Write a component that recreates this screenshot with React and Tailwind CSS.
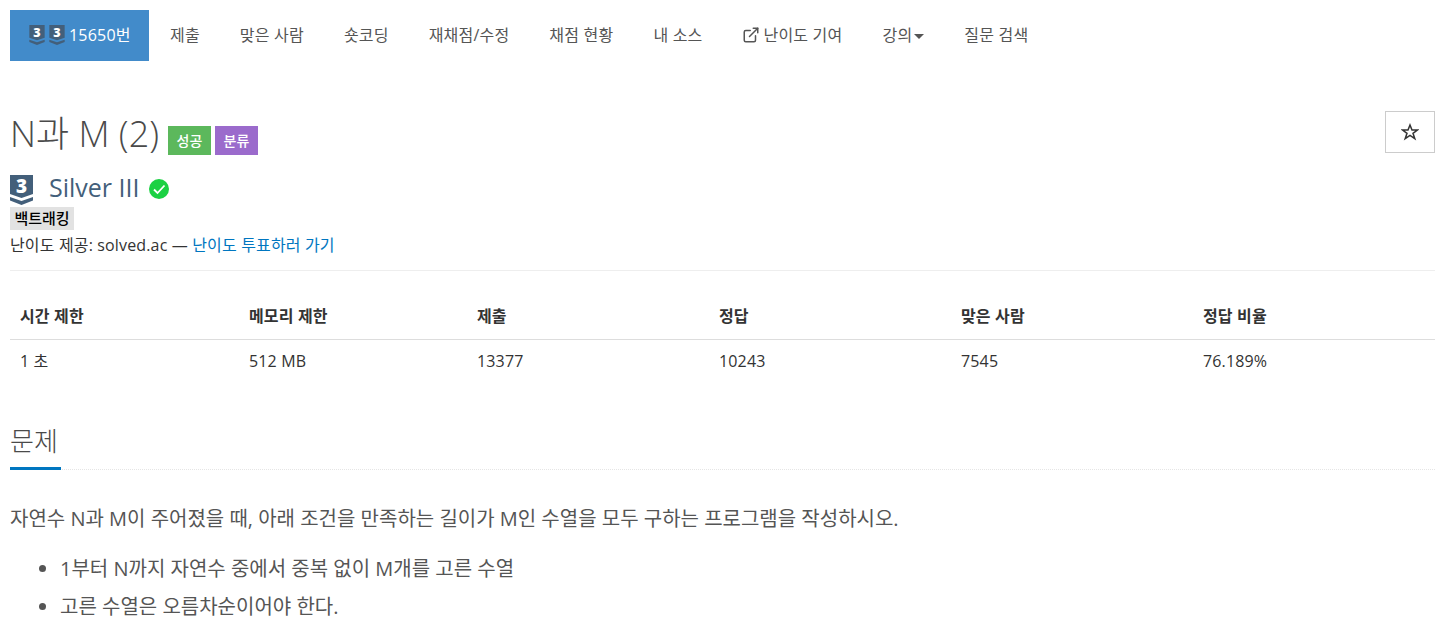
import React from 'react';
import { ExternalLink } from 'lucide-react';

const font = 'font-["Open_Sans","Noto_Sans_CJK_KR",sans-serif]';

function TierBadge({ className }) {
  return (
    <svg className={`overflow-visible ${className}`} viewBox="0 0 23 30" fill="none">
      <path d="M0 0h23v19l-11.500 4L0 19z" fill="#435f7a" />
      <path d="M0 22l11.500 4 11.500-4v3.500L11.500 30 0 25.500z" fill="#435f7a" />
      <text x="11.500" y="18" textAnchor="middle" fontSize="19" fontWeight="800" fill="#fff" fontFamily="Open Sans, sans-serif">3</text>
    </svg>
  );
}

export default function App() {
  const navItems = ['제출', '맞은 사람', '숏코딩', '재채점/수정', '채점 현황', '내 소스'];
  const heads = ['시간 제한', '메모리 제한', '제출', '정답', '맞은 사람', '정답 비율'];
  const cells = ['1 초', '512 MB', '13377', '10243', '7545', '76.189%'];
  const widths = ['w-[229px]', 'w-[228px]', 'w-[242px]', 'w-[242px]', 'w-[242px]', 'w-[242px]'];

  return (
    <div className={`${font} bg-white h-[634px] overflow-hidden pl-[10px] pr-[18px] pt-[10px] text-[16px] text-[#333]`}>
      <ul className="flex h-[51px] items-center text-[#555] tracking-[0.2px]">
        <li className="flex h-full w-[139px] items-center pl-[19px] pb-[2px] bg-[#428bca] text-white">
          <TierBadge className="w-[16px] h-[20px]" />
          <TierBadge className="ml-[4px] w-[16px] h-[20px]" />
          <span className="ml-[4px]">15650번</span>
        </li>
        {navItems.map((item, i) => (
          <li key={item} className={`${i === 0 ? 'ml-[1px]' : ''} mb-[2px] px-[20px] whitespace-nowrap`}>{item}</li>
        ))}
        <li className="flex items-center mb-[2px] px-[20px] whitespace-nowrap">
          <ExternalLink className="-ml-[1px] w-[18px] h-[18px] mr-[4px]" strokeWidth={2} />
          난이도 기여
        </li>
        <li className="flex items-center mb-[2px] px-[20px] whitespace-nowrap">
          강의
          <span className="ml-[2px] mt-[3px] border-x-[5px] border-t-[5px] border-x-transparent border-t-[#555]" />
        </li>
        <li className="mb-[2px] px-[20px] whitespace-nowrap">질문 검색</li>
      </ul>

      <div className="flex items-start justify-between pt-[50px]">
        <div className="flex items-center h-[46px]">
          <h1 className="text-[36px] leading-[46px] font-light text-[#4a4a4a]">N과 M (2)</h1>
          <span className="ml-[9px] mt-[13px] flex h-[29px] w-[43px] items-center justify-center bg-[#5cb85c] text-[14px] font-medium text-white">성공</span>
          <span className="ml-[4px] mt-[13px] flex h-[29px] w-[43px] items-center justify-center bg-[#9b6bcc] text-[14px] font-medium text-white">분류</span>
        </div>
        <button className="flex h-[42px] w-[50px] items-center justify-center border border-[#ccc] bg-white">
          <svg className="w-[18px] h-[18px]" viewBox="0 0 18 18" fill="none">
            <path d="M9 2l2 5h5.500l-4.500 3.300 1.800 5.400L9 12.500l-4.800 3.200L6 10.300 1.500 7H7z" stroke="#333" strokeWidth="1.500" />
          </svg>
        </button>
      </div>

      <div className="flex items-center h-[34px] mt-[14px]">
        <TierBadge className="mt-[3px] w-[23px] h-[30px]" />
        <span className="ml-[16px] text-[25px] text-[#435f7a]">Silver III</span>
        <svg className="ml-[9px] mt-[2px] w-[20px] h-[20px]" viewBox="0 0 20 20" fill="none">
          <circle cx="10" cy="10" r="10" fill="#1bd143" />
          <path d="M5 10.500l3.500 3.500L15.500 6.500" stroke="#fff" strokeWidth="1.800" />
        </svg>
      </div>

      <div className="flex mt-[2px]">
        <span className="flex h-[23px] w-[64px] items-center justify-center bg-[#e2e2e2] text-[15px] font-medium text-black">백트래킹</span>
      </div>
      <div className="h-[28px] leading-[28px] mt-[1px] tracking-[0.15px]">
        난이도 제공: solved.ac — <span className="text-[#0076c0]">난이도 투표하러 가기</span>
      </div>
      <div className="mt-[11px] border-t border-[#eee]" />

      <table className="mt-[22px] w-full table-fixed border-collapse tracking-[0.15px]">
        <thead>
          <tr className="border-b border-[#ddd]">
            {heads.map((h, i) => (
              <th key={h} className={`${widths[i]} h-[46px] px-[10px] text-left font-bold`}>{h}</th>
            ))}
          </tr>
        </thead>
        <tbody>
          <tr>
            {cells.map(c => (
              <td key={c} className="h-[44px] px-[10px]">{c}</td>
            ))}
          </tr>
        </tbody>
      </table>

      <div className="mt-[37px] border-b border-dotted border-[#e5e5e5] h-[50px] flex">
        <h2 className="h-[50px] w-[51px] border-b-[3px] border-[#0076c0] text-[26px] leading-[42px] font-light text-[#4a4a4a] whitespace-nowrap">문제</h2>
      </div>

      <p className="mt-[34px] text-[20px] leading-[30px] text-[#555]">
        자연수 N과 M이 주어졌을 때, 아래 조건을 만족하는 길이가 M인 수열을 모두 구하는 프로그램을 작성하시오.
      </p>
      <ul className="mt-[16px] list-disc pl-[50px] text-[20px] leading-[38px] text-[#555]">
        <li>1부터 N까지 자연수 중에서 중복 없이 M개를 고른 수열</li>
        <li>고른 수열은 오름차순이어야 한다.</li>
      </ul>
    </div>
  );
}
